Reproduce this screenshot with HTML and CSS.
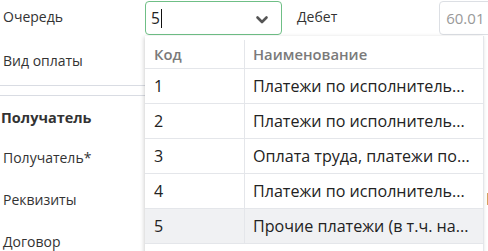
FILE: index.html
```html
<!DOCTYPE html>
<html lang="ru">
<head>
<meta charset="utf-8">
<link rel="stylesheet" href="styles.css">
</head>
<body>
<div class="page">
  <div class="row row-first">
    <div class="label">Очередь</div>
    <div class="select focused">
      <span class="value">5</span><span class="caret"></span>
      <svg class="chev" width="14" height="10" viewBox="0 0 14 10"><path d="M2.5 2.5 L7 7 L11.5 2.5" fill="none" stroke="#555" stroke-width="2.6" stroke-linecap="round" stroke-linejoin="round"/></svg>
    </div>
    <div class="label label-debet">Дебет</div>
    <div class="input disabled">60.01</div>
  </div>
  <div class="row row-second">
    <div class="label">Вид оплаты</div>
  </div>
  <div class="sep"></div>
  <div class="sep sep2"></div>
  <div class="section">Получатель</div>
  <div class="row row-field">
    <div class="label">Получатель*</div>
  </div>
  <div class="row row-field">
    <div class="label">Реквизиты</div>
    <div class="behind">Ко</div>
  </div>
  <div class="row row-field">
    <div class="label">Договор</div>
  </div>

  <div class="dropdown">
    <div class="dd-row dd-head">
      <div class="c1">Код</div>
      <div class="c2">Наименование</div>
    </div>
    <div class="dd-row"><div class="c1">1</div><div class="c2">Платежи по исполнитель...</div></div>
    <div class="dd-row"><div class="c1">2</div><div class="c2">Платежи по исполнитель...</div></div>
    <div class="dd-row"><div class="c1">3</div><div class="c2">Оплата труда, платежи по...</div></div>
    <div class="dd-row"><div class="c1">4</div><div class="c2">Платежи по исполнитель...</div></div>
    <div class="dd-row active"><div class="c1">5</div><div class="c2">Прочие платежи (в т.ч. на...</div></div>
  </div>
</div>
</body>
</html>
```

FILE: styles.css
```css
html, body {
  margin: 0;
  padding: 0;
  background: #fff;
  overflow: hidden;
}
body {
  font-family: "Open Sans", "Noto Sans", sans-serif;
  font-size: 14px;
  color: #333;
}
.page {
  position: relative;
  width: 488px;
  height: 251px;
  overflow: hidden;
}
.row {
  display: flex;
  align-items: center;
  height: 42px;
}
.row-first {
  height: 36px;
  align-items: flex-start;
  padding-top: 1px;
  box-sizing: border-box;
}
.row-first .label {
  line-height: 32px;
}
.row-second {
  height: 48px;
}
.label {
  width: 142px;
  padding-left: 3px;
  flex: none;
  color: #333;
}
.select {
  position: relative;
  width: 137px;
  height: 34px;
  box-sizing: border-box;
  border: 1px solid #6fbf86;
  border-radius: 4px;
  display: flex;
  align-items: center;
  padding-left: 5px;
  flex: none;
  font-size: 15.5px;
  color: #222;
}
.caret {
  display: inline-block;
  width: 1px;
  height: 19px;
  background: #111;
  margin-left: 1px;
}
.chev {
  position: absolute;
  right: 12px;
  top: 13px;
}
.label-debet {
  width: auto;
  padding-left: 15px;
}
.input {
  margin-left: 102px;
  width: 120px;
  height: 34px;
  box-sizing: border-box;
  border: 1px solid #dcdfe4;
  border-radius: 4px;
  padding-left: 6px;
  line-height: 32px;
  font-size: 15px;
  color: #999;
  flex: none;
}
.sep {
  height: 1px;
  background: #d9dce3;
  margin-top: 1px;
  width: 145px;
}
.sep2 {
  margin-top: 9px;
}
.section {
  font-weight: 700;
  font-size: 14.5px;
  padding-left: 1px;
  height: 40px;
  box-sizing: border-box;
  padding-top: 2px;
  line-height: 40px;
  color: #333;
}
.row-field {
  height: 42px;
  position: relative;
}
.behind {
  margin-left: 341px;
  color: #333;
  font-size: 16px;
}
.dropdown {
  position: absolute;
  left: 145px;
  top: 36px;
  width: 338px;
  background: #fff;
  box-shadow: -1px 1px 4px rgba(0, 0, 0, 0.18);
  border-right: 1px solid #e4e6ea;
}
.dd-row {
  display: flex;
  height: 35px;
  align-items: center;
  border-bottom: 1px solid #e4e6ea;
  box-sizing: border-box;
  font-size: 16.1px;
  color: #222;
}
.dd-head {
  height: 33px;
  padding-top: 4px;
  font-weight: 600;
  color: #7a7a7a;
  font-size: 14.8px;
}
.c1 {
  flex: none;
  width: 100px;
  box-sizing: border-box;
  padding-left: 9px;
  align-self: stretch;
  display: flex;
  align-items: center;
  border-right: 1px solid #e4e6ea;
}
.c2 {
  flex: none;
  padding-left: 8px;
  white-space: nowrap;
}
.dd-row.active {
  background: #f0f1f3;
}
.dd-row:last-child {
  margin-bottom: 10px;
}
```
